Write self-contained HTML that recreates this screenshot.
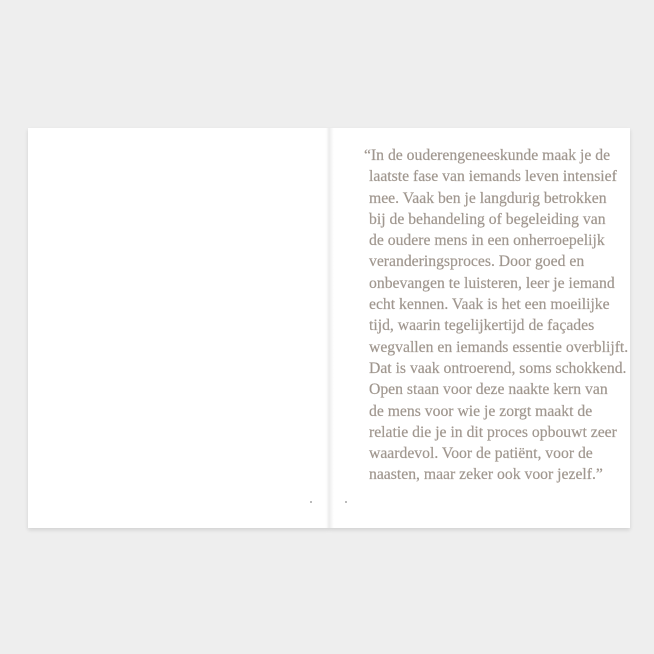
<!DOCTYPE html>
<html><head><style>
body{margin:0;width:654px;height:654px;background:#eeeeee;position:relative;overflow:hidden}
.pl{position:absolute;left:28px;top:128px;width:301px;height:400px;background:#fff;box-shadow:0 2px 4px rgba(0,0,0,.12)}
.pr{position:absolute;left:329px;top:128px;width:301px;height:400px;background:#fff;box-shadow:0 2px 4px rgba(0,0,0,.12)}
.sp{position:absolute;left:326px;top:128px;width:8px;height:400px;background:linear-gradient(90deg,#fff,#ececec 40%,#f4f4f4 60%,#fff)}
.t{position:absolute;left:369px;top:145px;font-family:"Liberation Serif",serif;font-size:15.7px;line-height:21.3px;color:#a0978f;white-space:pre;-webkit-text-stroke:0.2px #a0978f}
.dot{position:absolute;width:2px;height:2px;background:#bbb;top:501px}
</style></head><body>
<div class="pl"></div><div class="pr"></div><div class="sp"></div>
<div class="t"><span style="margin-left:-5px">“In de ouderengeneeskunde maak je de</span>
laatste fase van iemands leven intensief
mee. Vaak ben je langdurig betrokken
bij de behandeling of begeleiding van
de oudere mens in een onherroepelijk
veranderingsproces. Door goed en
onbevangen te luisteren, leer je iemand
echt kennen. Vaak is het een moeilijke
tijd, waarin tegelijkertijd de façades
wegvallen en iemands essentie overblijft.
Dat is vaak ontroerend, soms schokkend.
Open staan voor deze naakte kern van
de mens voor wie je zorgt maakt de
relatie die je in dit proces opbouwt zeer
waardevol. Voor de patiënt, voor de
naasten, maar zeker ook voor jezelf.”</div>
<div class="dot" style="left:310px"></div><div class="dot" style="left:345px"></div>
</body></html>
